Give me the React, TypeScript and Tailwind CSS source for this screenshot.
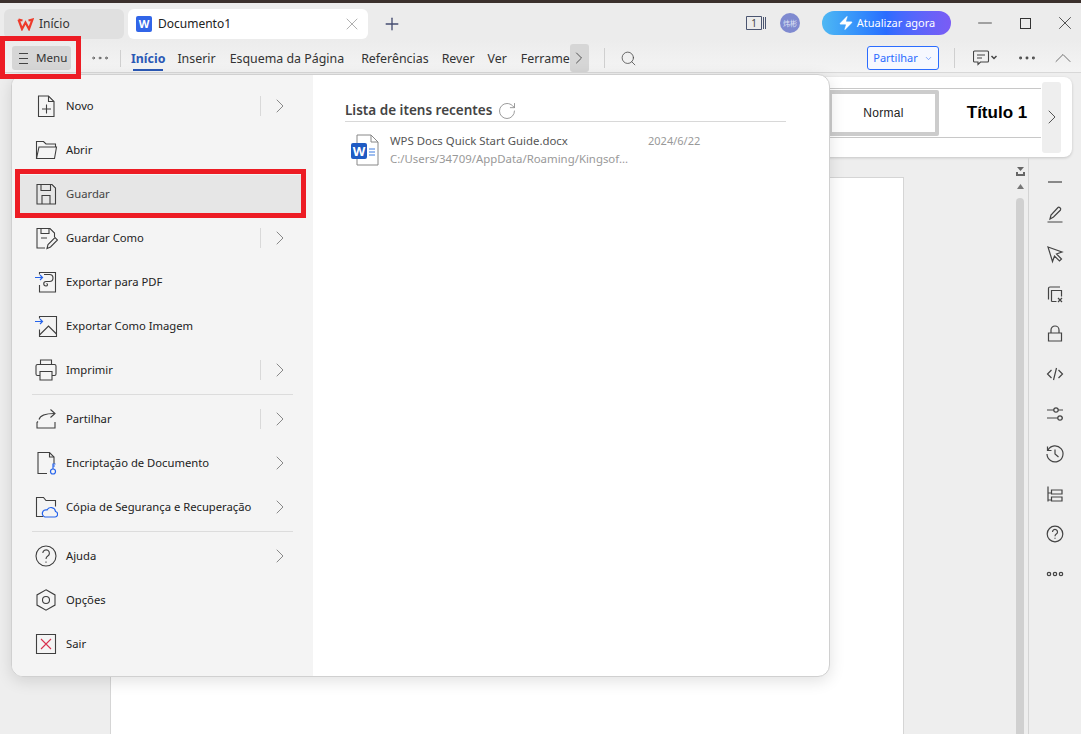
import { ReactNode } from "react";
import {
  ChevronRight,
  ChevronUp,
  ChevronDown,
  Ellipsis,
  Minus,
  Plus,
  RotateCw,
  Search,
  X,
  Zap,
} from "lucide-react";

const stroke = "#3f3f3f";
const blue = "#2563eb";

const Svg = ({ children, size = 24 }: { children: ReactNode; size?: number }) => (
  <svg width={size} height={size} viewBox="0 0 24 24" fill="none" stroke={stroke} strokeWidth="1.1">
    {children}
  </svg>
);

const icons: Record<string, ReactNode> = {
  novo: (
    <Svg>
      <path d="M4.500 2h10l5.500 5.500v15h-15.500z" />
      <path d="M14.500 2v5.500h5.500M8 15h9M12.500 10.500v9" />
    </Svg>
  ),
  abrir: (
    <Svg>
      <path d="M2.500 20.500v-17h7l2.500 2.500h9.500v3" />
      <path d="M2.500 20.500h18l2-11.500h-17.500l-2.500 11.500z" />
    </Svg>
  ),
  guardar: (
    <Svg>
      <path d="M3 2.500h15l3.500 3.500v16h-18.500z" />
      <path d="M7 2.500v6h9.500v-6M8 22v-8.500h8v8.500" />
    </Svg>
  ),
  guardarComo: (
    <Svg>
      <path d="M11 22h-8v-19.500h13l4.500 4.500v4" />
      <path d="M7 2.500v5h8v-5M7 12h6" />
      <path d="M13 22.500l1-4 7-7 2.500 2.500-7 7z" />
    </Svg>
  ),
  pdf: (
    <Svg>
      <path d="M5.500 4.500v-2h16v19.500h-16v-7" />
      <path d="M1 7.500h7M6 5l2.500 2.500-2.500 2.500" stroke={blue} strokeWidth="1.2" />
      <path d="M10 4.500h5.500a3.500 3.500 0 0 1 0 7h-3.500a2.200 2.200 0 0 0 0 4.500c1.800 0 2-2 .5-2.500" />
    </Svg>
  ),
  imagem: (
    <Svg>
      <path d="M5.500 4.500v-2h17v20h-17v-7" />
      <path d="M1 7.500h7M6 5l2.500 2.500-2.500 2.500" stroke={blue} strokeWidth="1.2" />
      <path d="M5.500 21l9-9 8 8" />
    </Svg>
  ),
  imprimir: (
    <Svg>
      <path d="M6.500 6.500v-4.500h11v4.500" />
      <path d="M6 17.500h-2.500a1.500 1.500 0 0 1-1.500-1.500v-8a1.500 1.500 0 0 1 1.500-1.500h17a1.500 1.500 0 0 1 1.500 1.500v8a1.500 1.500 0 0 1-1.500 1.500h-2.500" />
      <path d="M6 13.500h12v8.500h-12z" />
    </Svg>
  ),
  partilhar: (
    <Svg>
      <path d="M5 12.500c1-4 5-6 15.500-6" />
      <path d="M16.500 2.500l4.500 4-4.500 4" />
      <path d="M4 14.500l-1 1v5.500h18v-6" />
    </Svg>
  ),
  encriptar: (
    <Svg>
      <path d="M13 22.500h-9v-21h11.500l4.500 4.500v7" />
      <path d="M15.500 1.500v4.500h4.500" />
      <circle cx="19" cy="20.500" r="2.500" stroke={blue} strokeWidth="1.2" />
      <path d="M19 18v-5h2.500M19 15h2" stroke={blue} strokeWidth="1.2" />
    </Svg>
  ),
  copia: (
    <Svg>
      <path d="M9 21.500h-6.500v-19h7l2.500 3h9.500v6" />
      <path d="M11 22h10a2.800 2.800 0 0 0 .5-5.500 4.500 4.500 0 0 0-8.500-1.500 3.500 3.500 0 0 0-2 7z" stroke={blue} strokeWidth="1.2" />
    </Svg>
  ),
  ajuda: (
    <Svg>
      <circle cx="12" cy="12" r="10" />
      <path d="M8.800 9a3.300 3.300 0 1 1 5 3c-1.300.8-1.800 1.500-1.800 3" />
      <path d="M12 17.500v1.300" />
    </Svg>
  ),
  opcoes: (
    <Svg>
      <path d="M12 1.800l9 5.100v10.200l-9 5.100-9-5.100v-10.200z" />
      <circle cx="12" cy="12" r="3.500" />
    </Svg>
  ),
  sair: (
    <Svg>
      <path d="M2.500 2.500h19v19h-19z" />
      <path d="M7 7l10 10M17 7l-10 10" stroke="#d8324f" />
    </Svg>
  ),
};

type RowProps = { icon: string; label: string; arrow?: boolean; sep?: boolean; active?: boolean };

const Row = ({ icon, label, arrow, sep, active }: RowProps) => (
  <div className={`h-[44px] flex items-center relative pl-[22px] pr-[21px] ${active ? "text-[#444]" : "text-[#222]"}`}>
    {active && <div className="absolute left-[8px] right-[11px] top-[3px] bottom-[3px] bg-[#e6e6e6]" />}
    <div className="relative w-[24px] h-[24px] mr-[8px] shrink-0">{icons[icon]}</div>
    <span className="relative flex-1 text-[11.25px] whitespace-nowrap">{label}</span>
    {sep && <div className="w-px h-[20px] bg-[#d9d9d9] mr-[7px]" />}
    {arrow && <ChevronRight className="w-[24px] h-[24px] text-[#888]" strokeWidth={1} />}
  </div>
);

const Divider = () => <div className="h-px bg-[#dcdcdc] mx-[20px] my-[2px]" />;

const SideIcon = ({ children }: { children: ReactNode }) => (
  <div className="h-[40px] flex items-center justify-center">
    <svg width="20" height="20" viewBox="0 0 20 20" fill="none" stroke="#444" strokeWidth="1.2">
      {children}
    </svg>
  </div>
);

const WinButton = ({ children }: { children: ReactNode }) => (
  <div className="w-[22px] h-[22px] flex items-center justify-center text-[#333]">{children}</div>
);

export default function App() {
  return (
    <div className="relative w-[1081px] h-[734px] overflow-hidden flex flex-col bg-[#eeeeee] font-['Noto_Sans',sans-serif] text-[#333]">
      <div className="h-[3px] bg-[#3b302d] shrink-0" />

      {/* Tab bar */}
      <div className="h-[37px] shrink-0 flex items-start pt-[6px] pl-[4px] bg-[#ececec]">
        <div className="w-[120px] h-[30px] rounded-md bg-[#e0e0e0] flex items-center pl-[13px] gap-[5px] text-[12px]">
          <svg width="17" height="13" viewBox="0 0 17 13" fill="none" stroke="#ee3b2b" strokeWidth="2.200">
            <path d="M1.500 1.500l3.500 9.500 3.500-6.500 3.500 6.500 3.500-9.500-4 1M1.500 1.500l4 1" />
          </svg>
          <span>Início</span>
        </div>
        <div className="ml-[4px] w-[240px] h-[30px] rounded-md bg-white flex items-center pl-[8px] pr-[6px] text-[12px]">
          <div className="w-[16px] h-[16px] rounded-[2px] bg-[#3165e8] text-white text-[11px] font-bold flex items-center justify-center mr-[6px]">
            W
          </div>
          <span className="flex-1 text-[#222]">Documento1</span>
          <X className="w-[20px] h-[20px] text-[#888]" strokeWidth={0.8} />
        </div>
        <Plus className="ml-[14px] mt-[5px] w-[20px] h-[20px] text-[#444c70]" strokeWidth={1.6} />

        <div className="ml-auto flex items-center h-[24px] mt-[2px] pr-[5px]">
          <svg width="21" height="14" viewBox="0 0 21 14" fill="none" stroke="#4b5570" strokeWidth="1">
            <path d="M.500 .500h15v13h-15zM17.500 1v12M19.500 1v12" />
            <text x="8" y="11" textAnchor="middle" fontSize="10" fill="#444" stroke="none">1</text>
          </svg>
          <div className="ml-[13px] w-[20px] h-[20px] rounded-full bg-[#7f8ad0] text-[7px] text-[#dfe2f5] flex items-center justify-center font-['Noto_Sans_CJK_SC',sans-serif]">
            炜彬
          </div>
          <div className="ml-[22px] w-[129px] h-[24px] rounded-full bg-gradient-to-r from-[#4fb8f3] via-[#2b6cff] to-[#7a5cf5] flex items-center justify-center gap-[3px] text-white text-[11px]">
            <Zap className="w-[16px] h-[16px] fill-white" strokeWidth={0.5} />
            <span>Atualizar agora</span>
          </div>
          <div className="ml-[23px]">
            <WinButton>
              <Minus className="w-[22px] h-[22px]" strokeWidth={0.9} />
            </WinButton>
          </div>
          <div className="ml-[18px]">
            <WinButton>
              <div className="w-[11px] h-[11px] border-[1.2px] border-[#333]" />
            </WinButton>
          </div>
          <div className="ml-[18px]">
            <WinButton>
              <X className="w-[22px] h-[22px]" strokeWidth={0.9} />
            </WinButton>
          </div>
        </div>
      </div>

      {/* Toolbar */}
      <div className="h-[33px] shrink-0 flex items-center pt-[4px] border-b border-[#d8d8d8] bg-gradient-to-b from-[#ececec] to-[#f4f4f4] text-[12.4px]">
        <div className="ml-[12px] w-[59px] h-[24px] rounded-[3px] bg-[#d6d6d6] flex items-center pl-[7px] gap-[8px] text-[11.6px]">
          <svg width="9" height="11" viewBox="0 0 9 11" fill="none" stroke="#444" strokeWidth="1">
            <path d="M0 .500h9M0 5.500h9M0 10.500h9" />
          </svg>
          <span>Menu</span>
        </div>
        <Ellipsis className="ml-[18px] w-[22px] h-[22px] text-[#555]" strokeWidth={1} />
        <div className="ml-[9px] w-px h-[17px] bg-[#cfcfcf]" />
        <div className="h-full flex items-center pt-[3px]">
          <div className="ml-[10px] relative h-full flex items-center font-bold text-[#2a58b5]">
            Início
            <div className="absolute left-[2px] right-[2px] bottom-[1px] h-[2px] bg-[#2a58b5]" />
          </div>
          <div className="ml-[12px]">Inserir</div>
          <div className="ml-[14px]">Esquema da Página</div>
          <div className="ml-[17px]">Referências</div>
          <div className="ml-[13px]">Rever</div>
          <div className="ml-[13px]">Ver</div>
          <div className="ml-[14px] w-[49px] whitespace-nowrap">Ferrame</div>
        </div>
        <div className="w-[19px] h-[28px] rounded-[3px] bg-[#d6d6d6] flex items-center justify-center">
          <ChevronRight className="w-[20px] h-[20px] shrink-0 text-[#444]" strokeWidth={1.1} />
        </div>
        <div className="ml-[15px] w-px h-[20px] bg-[#cfcfcf]" />
        <Search className="ml-[15px] w-[17px] h-[17px] text-[#444]" strokeWidth={1.1} />
        <div className="ml-auto w-[72px] h-[24px] rounded-[3px] border border-[#2b6cff] text-[#2b6cff] text-[11px] flex items-center justify-center gap-[6px] bg-[#f6f8ff]">
          Partilhar
          <ChevronDown className="w-[9px] h-[9px]" strokeWidth={1.5} />
        </div>
        <div className="ml-[15px] w-px h-[20px] bg-[#cfcfcf]" />
        <svg className="ml-[18px]" width="24" height="16" viewBox="0 0 24 16" fill="none" stroke="#444" strokeWidth="1.1">
          <path d="M1.500 1h13a1 1 0 0 1 1 1v9a1 1 0 0 1-1 1h-7l-2.500 2.500v-2.500h-3.500a1 1 0 0 1-1-1v-9a1 1 0 0 1 1-1zM4 5h8M4 8h5" />
          <path d="M18.500 6l2.500 2.500 2.500-2.500" strokeWidth="1.500" />
        </svg>
        <Ellipsis className="ml-[19px] w-[22px] h-[22px] text-[#444]" strokeWidth={1.2} />
        <ChevronUp className="ml-[11px] mr-[4px] w-[28px] h-[28px] text-[#666]" strokeWidth={0.8} />
      </div>

      {/* Ribbon */}
      <div className="h-[91px] shrink-0 flex justify-end pt-[4px] pr-[9px]">
        <div className="w-[400px] h-[80px] bg-white rounded-lg shadow-[0_1px_3px_rgba(0,0,0,0.18)] flex items-center pr-[11px]">
          <div className="flex-1 h-[50px] mb-[9px] border-y border-[#c8c8c8] flex items-center justify-end">
            <div className="w-[111px] h-[46px] border-[4px] border-[#cccccc] rounded-[2px] flex items-center justify-center text-[12px] tracking-[0.3px] text-[#222] font-['Liberation_Sans',sans-serif]">
              Normal
            </div>
            <div className="w-[102px] pl-[14px] text-center text-[17px] font-bold text-black font-['Liberation_Sans',sans-serif] whitespace-nowrap">
              Título 1
            </div>
          </div>
          <div className="ml-[1px] w-[19px] h-[71px] rounded-[3px] bg-[#eeeeee] flex items-center justify-center">
            <ChevronRight className="w-[24px] h-[24px] shrink-0 text-[#555]" strokeWidth={1} />
          </div>
        </div>
      </div>

      {/* Document area */}
      <div className="flex-1 flex min-h-0">
        <div className="flex-1 pl-[110px] pt-[13px] min-w-0">
          <div className="w-[794px] h-[600px] bg-white border border-[#d5d5d5]" />
        </div>
        <div className="w-[12px] mr-[2px] flex flex-col items-center pt-[3px]">
          <svg className="shrink-0" width="9" height="9" viewBox="0 0 9 9" fill="#666">
            <path d="M1 0h7l-3.500 4zM0 5h2v2h5v-2h2v4h-9z" />
          </svg>
          <svg className="mt-[8px] shrink-0" width="7" height="5" viewBox="0 0 7 5" fill="#777">
            <path d="M3.500 0l3.500 5h-7z" />
          </svg>
          <div className="mt-[9px] w-[8px] flex-1 rounded-t-full bg-[#d0d0d0]" />
        </div>
        <div className="w-[53px] border-l border-[#d4d4d4] -mt-[7px] pt-[13px]">
          <div className="h-[24px] flex items-center justify-center">
            <div className="w-[14px] h-[1.5px] bg-[#888]" />
          </div>
          <SideIcon>
            <path d="M2.500 18h15M5 15l1-4 7-7.500c1-1 3.500 1 2.500 2.500l-7 7z" />
          </SideIcon>
          <SideIcon>
            <path d="M3 3l14 5-5.500 2 5 5-2 2-5-5-2 5.500z" />
          </SideIcon>
          <SideIcon>
            <path d="M15 3h-10a1.500 1.500 0 0 0-1.500 1.500v11M6.500 17.500v-11h10v6M6.500 17.500h5" />
            <path d="M13 14l4 4M17 14l-4 4" />
          </SideIcon>
          <SideIcon>
            <path d="M3.500 9h13v8h-13zM6 9v-3a4 4 0 0 1 8 0v3" />
          </SideIcon>
          <SideIcon>
            <path d="M6.500 6l-4 4 4 4M13.500 6l4 4-4 4M11.500 4l-3 12" />
          </SideIcon>
          <SideIcon>
            <path d="M2 6h7M13 6h5M2 14h11M17 14h1" />
            <circle cx="11" cy="6" r="2.200" />
            <circle cx="15" cy="14" r="2.200" />
          </SideIcon>
          <SideIcon>
            <path d="M3 6a8 8 0 1 1-1 4M2.500 2.500v4h4M10 5.500v4.500l3.500 3" />
          </SideIcon>
          <SideIcon>
            <path d="M3 2.500v15M3 9h3M3 16h3" />
            <path d="M6.500 6h10.500v4h-10.500zM6.500 13h10.500v4h-10.500z" />
          </SideIcon>
          <SideIcon>
            <circle cx="10" cy="10" r="7.800" />
            <path d="M7.500 8a2.500 2.500 0 1 1 3.800 2.100c-1 .6-1.300 1.100-1.300 2.200M10 13.800v1" />
          </SideIcon>
          <SideIcon>
            <circle cx="4" cy="10" r="1.700" />
            <circle cx="10" cy="10" r="1.700" />
            <circle cx="16" cy="10" r="1.700" />
          </SideIcon>
        </div>
      </div>

      {/* File menu popup */}
      <div className="absolute left-[11px] top-[74px] w-[819px] h-[603px] rounded-[12px] border border-[#d0d0d0] bg-white shadow-[0_4px_16px_rgba(0,0,0,0.12)] overflow-hidden flex">
        <div className="w-[301px] shrink-0 bg-[#f4f4f4] pt-[9px]">
          <Row icon="novo" label="Novo" arrow sep />
          <Row icon="abrir" label="Abrir" />
          <Row icon="guardar" label="Guardar" active />
          <Row icon="guardarComo" label="Guardar Como" arrow sep />
          <Row icon="pdf" label="Exportar para PDF" />
          <Row icon="imagem" label="Exportar Como Imagem" />
          <Row icon="imprimir" label="Imprimir" arrow sep />
          <Divider />
          <Row icon="partilhar" label="Partilhar" arrow sep />
          <Row icon="encriptar" label="Encriptação de Documento" arrow />
          <Row icon="copia" label="Cópia de Segurança e Recuperação" arrow />
          <Divider />
          <Row icon="ajuda" label="Ajuda" arrow />
          <Row icon="opcoes" label="Opções" />
          <Row icon="sair" label="Sair" />
        </div>
        <div className="flex-1 pl-[32px] pr-[43px] pt-[26px]">
          <div className="h-[21px] border-b border-[#d8d8d8] flex items-start gap-[5px]">
            <span className="text-[13.5px] leading-[19px] font-semibold text-[#444]">Lista de itens recentes</span>
            <RotateCw className="w-[20px] h-[20px] text-[#888]" strokeWidth={1} />
          </div>
          <div className="flex mt-[12px] pl-[6px]">
            <svg className="shrink-0" width="28" height="32" viewBox="0 0 28 32" fill="none">
              <path d="M6 1h14l7 7v23h-21z" fill="#fff" stroke="#888" />
              <path d="M20 1v7h7" stroke="#888" />
              <rect x="0" y="9" width="16" height="16" rx="2" fill="#1f5bc4" />
              <path d="M18 15h6M18 18h6M18 21h6" stroke="#3a7be0" />
              <text x="8" y="21.500" textAnchor="middle" fontSize="13" fontWeight="700" fill="#fff" stroke="none">W</text>
            </svg>
            <div className="ml-[11px] w-[258px] text-[11.4px] leading-[18px] -mt-[2px]">
              <div className="text-[#555]">WPS Docs Quick Start Guide.docx</div>
              <div className="text-[#999] whitespace-nowrap">C:/Users/34709/AppData/Roaming/Kingsof...</div>
            </div>
            <div className="text-[11px] leading-[18px] -mt-[2px] text-[#999]">2024/6/22</div>
          </div>
        </div>
      </div>

      {/* Red annotations */}
      <div className="absolute left-0 top-[36px] w-[81px] h-[43px] border-[5px] border-[#ed1c24]" />
      <div className="absolute left-[15px] top-[169px] w-[291px] h-[49px] border-[5px] border-[#ed1c24]" />
    </div>
  );
}
